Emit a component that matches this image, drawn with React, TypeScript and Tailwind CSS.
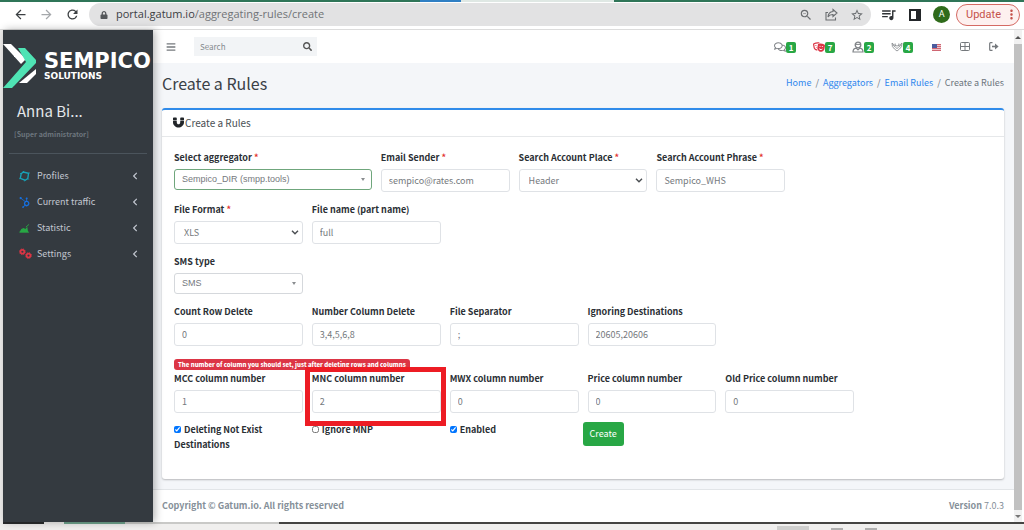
import React from "react";
import { FaBars, FaSearch, FaRegComments, FaTheaterMasks, FaMagnet, FaHubspot, FaChevronLeft, FaLock } from "react-icons/fa";
import {
  MdArrowBack, MdArrowForward, MdRefresh, MdOutlineZoomOut, MdStarBorder, MdQueueMusic, MdMoreVert,
} from "react-icons/md";

type IconProps = { className?: string };

function ShareIcon() {
  return (
    <svg viewBox="0 0 13 13" className="h-[13px] w-[13px]" fill="none" stroke="currentColor" strokeWidth="1.1">
      <path d="M3 4.5H1V12H10.5V9.5" />
      <path d="M8 1.5L12 5L8 8.5V6.5C5.5 6.4 4 7.3 3 9C3.2 6 4.8 3.8 8 3.5Z" />
    </svg>
  );
}

function RingIcon({ className }: IconProps) {
  return (
    <svg viewBox="0 0 12 12" className={`h-3 w-[11px] ${className}`} fill="none" stroke="currentColor">
      <path d="M4.5 1.6L10.4 3L9.6 8.8L6.6 10.6L1.4 8.6L2.4 3.6Z" strokeWidth="1.5" />
      <path d="M4.5 1.6L5.5 0.5M10.4 3L11.6 2.6M9.6 8.8L10.6 9.8M6.6 10.6L6 11.8M1.4 8.6L0.4 9M2.4 3.6L1.2 3.2" />
    </svg>
  );
}

function GrowthIcon({ className }: IconProps) {
  return (
    <svg viewBox="0 0 12 12" className={`h-3 w-[11px] ${className}`}>
      <path d="M0.5 10.5L2.5 7L5 6L7 7L9 4.5L10 10.5Z" fill="currentColor" />
      <path d="M0.5 10.5H11M7.5 5L11 2" stroke="currentColor" />
    </svg>
  );
}

function GearsIcon({ className }: IconProps) {
  return (
    <svg viewBox="0 0 13 12" className={`h-3 w-[13px] ${className}`} fill="none" stroke="currentColor">
      <circle cx="3.4" cy="3.8" r="1.9" strokeWidth="1.7" />
      <circle cx="3.4" cy="3.8" r="2.9" strokeDasharray="1.1 1.2" />
      <circle cx="9.5" cy="7.6" r="1.9" strokeWidth="1.7" />
      <circle cx="9.5" cy="7.6" r="2.9" strokeDasharray="1.1 1.2" />
    </svg>
  );
}

function AgentIcon({ className }: IconProps) {
  return (
    <svg viewBox="0 0 12 12" className={`h-3 w-3 ${className}`} fill="none" stroke="currentColor">
      <circle cx="6" cy="4" r="2.8" strokeWidth="1.3" />
      <path d="M3.2 3.4H8.8" />
      <path d="M1 11C1 8.5 2.5 7.4 4.2 7.2L6 9L7.8 7.2C9.5 7.4 11 8.5 11 11Z" strokeWidth="1.2" />
    </svg>
  );
}

function WingsIcon({ className }: IconProps) {
  return (
    <svg viewBox="0 0 12 12" className={`h-3 w-3 ${className}`} fill="none" stroke="currentColor" strokeWidth="0.8">
      <path d="M1 2L3.2 4L6 5L8.8 4L11 2L10.6 5.5L8.5 8L6 10L3.5 8L1.4 5.5Z" />
      <path d="M1.4 3.8L4.5 6.2L6 7.6L7.5 6.2L10.6 3.8M4.2 2.5V4.6M7.8 2.5V4.6" />
    </svg>
  );
}

function BrowserBar() {
  return (
    <header className="shrink-0 border-b border-[#dcdcdc] bg-white">
      <div className="flex h-[2px]">
        <div className="w-[41%] bg-[#2f7558]" />
        <div className="w-[4%] bg-[#2f7fc4]" />
        <div className="w-[15%] bg-[#dfe8e4]" />
        <div className="flex-1 bg-[#2f7558]" />
      </div>
      <div className="flex h-[27px] items-center pb-[2px] pr-1">
        <div className="flex w-[89px] shrink-0 items-center gap-[11px] pl-[13px] text-[15px] text-[#3c4043]">
          <button aria-label="Back"><MdArrowBack /></button>
          <button aria-label="Forward" className="text-[#a5a8ab]"><MdArrowForward /></button>
          <button aria-label="Reload"><MdRefresh /></button>
        </div>
        <div className="flex h-[23px] flex-1 items-center rounded-full bg-[#e2e2e3] pl-[11px] pr-[7px]">
          <FaLock className="mr-[8px] text-[8px] text-[#55585b]" />
          <span className="flex-1 font-['Open_Sans',sans-serif] text-[11px] text-[#707376]">
            <span className="text-[#3c4043]">portal.gatum.io</span>/aggregating-rules/create
          </span>
          <div className="flex items-center gap-3 text-[14px] text-[#6a6d70]">
            <button aria-label="Zoom"><MdOutlineZoomOut /></button>
            <button aria-label="Share"><ShareIcon /></button>
            <button aria-label="Bookmark"><MdStarBorder /></button>
          </div>
        </div>
        <div className="flex items-center pl-[9px] text-[#2f3235]">
          <button aria-label="Media" className="text-[17px]"><MdQueueMusic /></button>
          <button aria-label="Side panel" className="ml-3 h-3 w-3 border-2 border-r-[5px] border-[#232629]" />
          <button aria-label="Account" className="ml-3 h-[17px] w-[17px] rounded-full bg-[#2f6b1b] font-['Roboto',sans-serif] text-[9px] text-white">A</button>
          <button className="ml-[6px] flex h-[22px] items-center rounded-full border border-[#d56a63] bg-[#fdf0ef] pl-[9px] font-['Roboto',sans-serif] text-[11px] leading-5 text-[#c5524b]">
            Update <MdMoreVert className="ml-[3px] text-[15px]" />
          </button>
        </div>
      </div>
    </header>
  );
}

function Logo() {
  return (
    <div className="flex h-[60px] items-center overflow-hidden pt-[12px]">
      <svg viewBox="0 0 33 46" className="h-[46px] w-[33px] shrink-0">
        <path d="M0 1H8L23 16L18 21Z" fill="#fff" />
        <path d="M33 26V31L24 40H16Z" fill="#fff" />
        <path d="M15 5H22L33 17V20L9 45H0L23 19Z" fill="#4fe3b4" />
      </svg>
      <div className="pl-2 font-['DejaVu_Sans',sans-serif] font-bold text-white">
        <div className="text-[21px] leading-[21px]">SEMPICO</div>
        <div className="text-[9px] leading-[9px]">SOLUTIONS</div>
      </div>
    </div>
  );
}

const menu = [
  { label: "Profiles", icon: RingIcon, color: "text-[#17a2b8]" },
  { label: "Current traffic", icon: FaHubspot, color: "text-[#1670e0]" },
  { label: "Statistic", icon: GrowthIcon, color: "text-[#28a745]" },
  { label: "Settings", icon: GearsIcon, color: "text-[#dc3545]" },
];

function Sidebar() {
  return (
    <aside className="z-10 w-[150px] shrink-0 bg-[#343a40] text-[#c2c7d0] shadow-[2px_0_8px_rgba(0,0,0,0.3)]">
      <Logo />
      <div className="mx-[6px] border-b border-[#4b545c] pb-[13px] pt-[10px]">
        <div className="pl-2 text-[15px] leading-[22px] text-[#e4e7ea]">Anna Bi...</div>
        <div className="mt-[6px] pl-[5px] text-[7px] font-bold leading-[12px] text-[#6c757d]">[Super administrator]</div>
      </div>
      <nav className="pt-[9px]">
        {menu.map(({ label, icon: Icon, color }) => (
          <a key={label} href="#" className="flex h-[26px] items-center pl-[16px] pr-[14px] text-[9px]">
            <span className="flex w-[18px] shrink-0"><Icon className={`text-[11px] ${color}`} /></span>
            <span className="flex-1">{label}</span>
            <FaChevronLeft className="text-[8px]" />
          </a>
        ))}
      </nav>
    </aside>
  );
}

const alerts = [
  { name: "Messages", icon: FaRegComments, count: 1, color: "text-[#808488]" },
  { name: "Masks", icon: FaTheaterMasks, count: 7, color: "text-[#dc3545]" },
  { name: "Users", icon: AgentIcon, count: 2, color: "text-[#808488]" },
  { name: "Packs", icon: WingsIcon, count: 4, color: "text-[#808488]" },
];

function TopNav() {
  return (
    <div className="flex h-[33px] items-center bg-white pl-[13px] pr-[15px] text-[#75797d]">
      <button aria-label="Menu"><FaBars className="text-[10px]" /></button>
      <div className="ml-[18px] flex h-[19px] w-[123px] items-center bg-[#f2f4f6] pl-[6px] pr-[5px]">
        <input aria-label="Search" placeholder="Search" className="min-w-0 flex-1 bg-transparent text-[8px] outline-none placeholder:text-[#868a8e]" />
        <button aria-label="Run search"><FaSearch className="text-[9px] text-[#555]" /></button>
      </div>
      <div className="ml-auto flex items-center">
        {alerts.map(({ name, icon: Icon, count, color }) => (
          <button key={name} aria-label={name} className="mr-[17px] flex w-[22px] items-center">
            <Icon className={`shrink-0 text-[12px] ${color}`} />
            <span className="mt-[2px] h-[11px] w-[10px] shrink-0 rounded-[2px] bg-[#28a745] text-[8px] font-bold leading-[11px] text-white">{count}</span>
          </button>
        ))}
        <svg viewBox="0 0 9 7" className="ml-[2px] mt-[2px] h-[7px] w-[9px]">
          <path d="M0 0H9V7H0Z" fill="#eec5cb" />
          <path d="M0 0.5H9M0 2.5H9M0 4.5H9M0 6.5H9" stroke="#cf6672" />
          <path d="M0 0H5V4H0Z" fill="#4a5c9e" />
        </svg>
        <button aria-label="Grid" className="ml-[19px]">
          <svg viewBox="0 0 10 9" className="h-[9px] w-[10px]" fill="none" stroke="currentColor">
            <rect x="0.5" y="0.5" width="9" height="8" rx="1" />
            <path d="M5 0.5V8.5M0.5 4.5H9.5" />
          </svg>
        </button>
        <button aria-label="Log out" className="ml-[19px]">
          <svg viewBox="0 0 10 9" className="h-[9px] w-[10px]" fill="none" stroke="currentColor" strokeWidth="1.2">
            <path d="M3.5 0.7H1.6Q0.7 0.7 0.7 1.6V7.4Q0.7 8.3 1.6 8.3H3.5" />
            <path d="M3 4.5H7" strokeWidth="1.6" />
            <path d="M6 1.6L9.6 4.5L6 7.4Z" fill="currentColor" stroke="none" />
          </svg>
        </button>
      </div>
    </div>
  );
}

const box = "block w-full rounded-[3px] border border-[#dfe2e6] bg-white text-[#75797d] outline-none";

function Field({ id, label, required, wide, children }: { id: string; label: string; required?: boolean; wide?: boolean; children: React.ReactNode }) {
  return (
    <div className={wide ? "col-span-3" : "col-span-2"}>
      <label htmlFor={id} className="mb-[2px] block whitespace-nowrap text-[9px] font-bold leading-[18px] text-[#2b3035]">
        {label}{required && <span className="text-[#e3342f]"> *</span>}
      </label>
      {children}
    </div>
  );
}

function Text({ id, value }: { id: string; value: string }) {
  return <input id={id} defaultValue={value} className={`${box} h-[23px] px-[7px] text-[9px]`} />;
}

function Choice({ id, value }: { id: string; value: string }) {
  return (
    <div className="relative">
      <select id={id} className={`${box} h-[23px] appearance-none px-[9px] text-[9px]`}><option>{value}</option></select>
      <svg viewBox="0 0 8 5" className="pointer-events-none absolute right-1 top-[9px] h-[5px] w-2" fill="none" stroke="#4a4e52" strokeWidth="1.4">
        <path d="M1 0.7L4 3.7L7 0.7" />
      </svg>
    </div>
  );
}

function PlainChoice({ id, value, valid }: { id: string; value: string; valid?: boolean }) {
  return (
    <div className="relative">
      <select id={id} className={`block h-[21px] w-full appearance-none rounded-[3px] border bg-white px-[7px] font-['Liberation_Sans',sans-serif] text-[9px] text-[#75797d] ${valid ? "border-[#6fa67c]" : "border-[#d5d8dc]"}`}>
        <option>{value}</option>
      </select>
      <span className="pointer-events-none absolute right-[7px] top-[9px] border-x-2 border-t-[3px] border-x-transparent border-t-[#8a8d90]" />
    </div>
  );
}

function Check({ id, label, checked }: { id: string; label: string; checked?: boolean }) {
  return (
    <div className="col-span-2 text-[9px] font-bold leading-[15px] text-[#2b3035]">
      <input id={id} type="checkbox" defaultChecked={checked} className="mr-[3px] h-[7px] w-[7px] align-baseline" />
      <label htmlFor={id}>{label}</label>
    </div>
  );
}

function RulesForm() {
  const row = "mb-[9px] grid grid-cols-12 gap-x-[9px]";
  return (
    <form className="px-3 pb-[27px] pt-3" onSubmit={(e) => e.preventDefault()}>
      <div className={row}>
        <Field id="aggregator" label="Select aggregator" required wide><PlainChoice id="aggregator" value="Sempico_DIR (smpp.tools)" valid /></Field>
        <Field id="sender" label="Email Sender" required><Text id="sender" value="sempico@rates.com" /></Field>
        <Field id="place" label="Search Account Place" required><Choice id="place" value="Header" /></Field>
        <Field id="phrase" label="Search Account Phrase" required><Text id="phrase" value="Sempico_WHS" /></Field>
      </div>
      <div className={row}>
        <Field id="format" label="File Format" required><Choice id="format" value="XLS" /></Field>
        <Field id="filename" label="File name (part name)"><Text id="filename" value="full" /></Field>
      </div>
      <div className={row}>
        <Field id="sms" label="SMS type"><PlainChoice id="sms" value="SMS" /></Field>
      </div>
      <div className={row}>
        <Field id="rows" label="Count Row Delete"><Text id="rows" value="0" /></Field>
        <Field id="columns" label="Number Column Delete"><Text id="columns" value="3,4,5,6,8" /></Field>
        <Field id="separator" label="File Separator"><Text id="separator" value=";" /></Field>
        <Field id="ignoring" label="Ignoring Destinations"><Text id="ignoring" value="20605,20606" /></Field>
      </div>
      <div className="flex pt-1">
        <span className="h-[11px] whitespace-nowrap rounded-[3px] bg-[#dc3545] px-1 text-[6px] font-black leading-[11px] text-white">
          The number of column you should set, just after deleting rows and columns
        </span>
      </div>
      <div className={row}>
        <Field id="mcc" label="MCC column number"><Text id="mcc" value="1" /></Field>
        <div className="relative col-span-2 grid">
          <Field id="mnc" label="MNC column number"><Text id="mnc" value="2" /></Field>
          <div className="pointer-events-none absolute -bottom-[13px] -left-[7px] -right-[5px] -top-[3px] z-10 border-[5px] border-[#ed1c24]" />
        </div>
        <Field id="mwx" label="MWX column number"><Text id="mwx" value="0" /></Field>
        <Field id="price" label="Price column number"><Text id="price" value="0" /></Field>
        <Field id="oldprice" label="Old Price column number"><Text id="oldprice" value="0" /></Field>
      </div>
      <div className="grid grid-cols-12 gap-x-[9px]">
        <Check id="notexist" label="Deleting Not Exist Destinations" checked />
        <Check id="mnp" label="Ignore MNP" />
        <Check id="enabled" label="Enabled" checked />
        <div className="col-span-2 -ml-[5px]">
          <button className="block h-6 rounded-[3px] bg-[#28a745] px-[7px] text-[9px] text-white">Create</button>
        </div>
      </div>
    </form>
  );
}

function Crumbs() {
  return (
    <nav aria-label="Breadcrumb" className="flex gap-1 text-[9px] text-[#6c757d]">
      {["Home", "Aggregators", "Email Rules"].map((c) => (
        <React.Fragment key={c}><a href="#" className="text-[#2f86ee]">{c}</a><span>/</span></React.Fragment>
      ))}
      <span>Create a Rules</span>
    </nav>
  );
}

export default function App() {
  return (
    <div className="flex min-h-screen flex-col bg-[#f0efee] font-['Noto_Sans_CJK_SC',sans-serif]">
      <BrowserBar />
      <div className="flex flex-1 border-r-2 border-white pl-[3px]">
        <Sidebar />
        <div className="flex min-w-0 flex-1 flex-col bg-[#f4f6f9]">
          <TopNav />
          <main className="flex-1 pb-[10px] pl-[9px] pr-[10px]">
            <div className="flex h-[45px] items-center justify-between pb-[6px]">
              <h1 className="text-[16px] text-[#3a4046]">Create a Rules</h1>
              <Crumbs />
            </div>
            <section className="rounded-[3px] border-t-2 border-[#2f8bea] bg-white shadow-[0_1px_2px_rgba(0,0,0,0.25)]">
              <h2 className="flex h-[27px] items-center border-b border-[#e6e8ea] px-[11px] pb-px text-[10px] text-[#4a4f54]">
                <FaMagnet className="mr-px text-[11px] text-[#212529]" />Create a Rules
              </h2>
              <RulesForm />
            </section>
          </main>
          <footer className="flex h-[33px] items-center justify-between border-t border-[#e2e5e8] bg-white pl-[9px] pr-[10px] text-[9px] text-[#869099]">
            <strong>Copyright © Gatum.io. All rights reserved</strong>
            <span><b>Version</b> 7.0.3</span>
          </footer>
        </div>
        <div className="flex w-2 shrink-0 flex-col items-center bg-[#f1f1f1]">
          <div className="flex h-[14px] items-center"><span className="border-x-[3px] border-b-[3px] border-x-transparent border-b-[#555]" /></div>
          <div className="w-full flex-1 bg-[#c1c1c1]" />
          <div className="flex h-[12px] items-center"><span className="border-x-[3px] border-t-[3px] border-x-transparent border-t-[#777]" /></div>
        </div>
      </div>
      <div className="flex h-[2px] shrink-0 pl-[3px]">
        <div className="w-[4%] bg-[#2a2c2e]" />
        <div className="w-[2%]" />
        <div className="w-[6%] bg-[#6fa38d]" />
        <div className="w-[15%] bg-[#c9c9c7]" />
        <div className="flex-1 bg-[#454442]" />
      </div>
      <div className="flex h-[6px] shrink-0 items-end justify-end gap-[22px] pr-[147px]">
        <span className="h-1 w-8 bg-[#cfcfce]" />
        <span className="h-[2px] w-3 bg-[#b0b0b0]" />
        <span className="h-[2px] w-3 bg-[#b0b0b0]" />
      </div>
    </div>
  );
}
